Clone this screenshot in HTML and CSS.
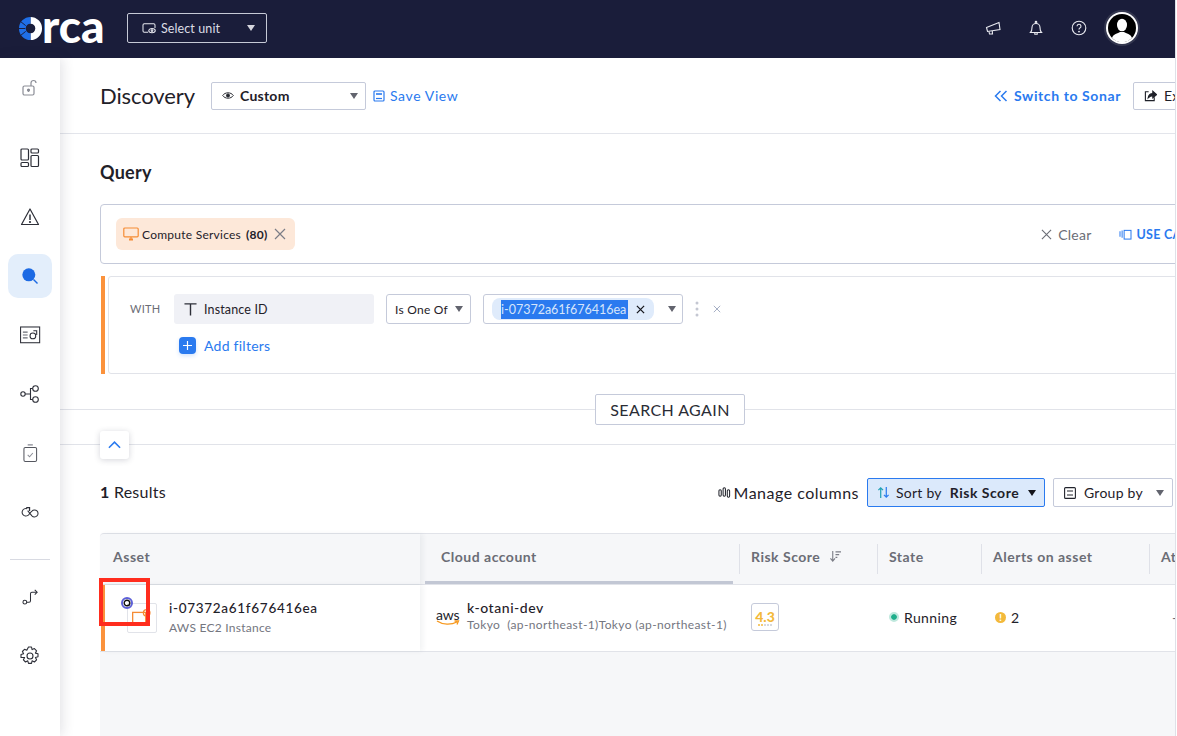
FILE: index.html
```html
<!DOCTYPE html>
<html lang="en">
<head>
<meta charset="utf-8">
<title>Orca Discovery</title>
<link rel="stylesheet" href="styles.css">
</head>
<body>
<div class="app">
  <header class="topbar">
    <div class="logo">
      <svg class="logo-o" viewBox="0 0 26 26" width="25" height="25"><path d="M13 1A12 12 0 0 1 13 25V18A5 5 0 0 0 13 8Z" fill="#fff"/><path d="M13 1A12 12 0 0 0 13 25V18A5 5 0 0 1 13 8Z" fill="#1f6fe8"/><path d="M3 6l5 4M1 13h6.500M3 20l5-4" stroke="#1a1d3a" stroke-width="1"/></svg>
      <span class="logo-text">rca</span>
    </div>
    <button class="unit-select">
      <svg viewBox="0 0 16 14" width="14" height="12" fill="none" stroke="#e8e9f0" stroke-width="1.2"><path d="M7 12H2.500A1.500 1.500 0 0 1 1 10.500V3.500A1.500 1.500 0 0 1 2.500 2H13.500A1.500 1.500 0 0 1 15 3.500V7"/><ellipse cx="11.500" cy="10" rx="3.800" ry="2.500"/><circle cx="11.500" cy="10" r="1"/></svg>
      <span class="unit-label">Select unit</span>
      <span class="caret caret-light"></span>
    </button>
    <div class="top-actions">
      <svg viewBox="0 0 16 16" width="16" height="16" fill="none" stroke="#e9eaf0" stroke-width="1.100"><path d="M1.500 7.500L14 2.500L15 9.500L2.500 11.500Z"/><path d="M4 11.500l.5 2.500h3l-.2-3"/></svg>
      <svg viewBox="0 0 16 16" width="16" height="16" fill="none" stroke="#e9eaf0" stroke-width="1.100"><path d="M2.500 12.500C4 11 4 9.500 4 7.500A4 4 0 0 1 12 7.500C12 9.500 12 11 13.500 12.500Z"/><circle cx="8" cy="2.200" r=".8"/><path d="M6.800 13v1.300h2.400V13"/></svg>
      <svg viewBox="0 0 16 16" width="16" height="16" fill="none" stroke="#e9eaf0" stroke-width="1.100"><circle cx="8" cy="8" r="6.800"/><path d="M6 6.200A2 2 0 1 1 8.600 8.200C8.100 8.500 8 8.800 8 9.600"/><circle cx="8" cy="11.600" r=".4"/></svg>
      <div class="avatar">
        <svg viewBox="0 0 28 28" width="28" height="28"><circle cx="14" cy="14" r="14" fill="#000"/><ellipse cx="14" cy="11" rx="5" ry="6.300" fill="#fff"/><path d="M4 24c1-4 6-4.500 8-6h4c2 1.500 7 2 8 6a14 14 0 0 1-20 0Z" fill="#fff"/></svg>
      </div>
    </div>
  </header>

  <div class="body-row">
    <nav class="sidebar">
      <div class="nav-item nav-lock">
        <svg viewBox="0 0 18 18" width="18" height="18" fill="none" stroke="#8b8d96" stroke-width="1.200"><rect x="2" y="7" width="11" height="9" rx="1.500"/><path d="M10 7V4a2.500 2.500 0 0 1 5 0"/><circle cx="7.500" cy="11" r="1" fill="#55575f"/><path d="M7.500 11v2"/></svg>
      </div>
      <div class="nav-item nav-first">
        <svg viewBox="0 0 20 20" width="20" height="20" fill="none" stroke="#2d2f38" stroke-width="1.200"><rect x="1" y="1" width="7.500" height="11" rx="1"/><rect x="1" y="14.500" width="7.500" height="4" rx="1"/><rect x="11" y="1" width="7.500" height="4" rx="1"/><rect x="11" y="7.500" width="7.500" height="11" rx="1"/></svg>
      </div>
      <div class="nav-item">
        <svg viewBox="0 0 20 20" width="20" height="20" fill="none" stroke="#2d2f38" stroke-width="1.200"><path d="M10 2L18.500 17.500H1.500Z" stroke-linejoin="round"/><path d="M10 7.500v5.500" stroke-width="1.500"/><circle cx="10" cy="15" r=".5"/></svg>
      </div>
      <div class="nav-item nav-active">
        <svg viewBox="0 0 18 18" width="18" height="18"><circle cx="7.800" cy="7.800" r="6.500" fill="#1c6ae4"/><path d="M12.500 12.500L16.500 16.500" stroke="#1c6ae4" stroke-width="1.400"/></svg>
      </div>
      <div class="nav-item">
        <svg viewBox="0 0 22 18" width="21" height="18" fill="none" stroke="#2d2f38" stroke-width="1.100"><rect x=".6" y=".6" width="20" height="16.500"/><path d="M3 6h5M3 9h5M3 12h5" stroke="#6b6d76"/><circle cx="13.500" cy="10" r="3"/><path d="M14 4.500h3.500V9"/></svg>
      </div>
      <div class="nav-item">
        <svg viewBox="0 0 20 18" width="20" height="18" fill="none" stroke="#2d2f38" stroke-width="1.100"><circle cx="3" cy="9" r="2.200"/><circle cx="15.500" cy="3.500" r="2.800"/><circle cx="15.500" cy="14.500" r="2.800"/><path d="M5.200 9h5M12.700 3.500H10.500V14.500H12.700"/></svg>
      </div>
      <div class="nav-item">
        <svg viewBox="0 0 16 20" width="15" height="19" fill="none" stroke="#55575f" stroke-width="1.100"><rect x="1" y="3.500" width="13.500" height="15" rx="1.500"/><path d="M5 .8h5.500" stroke="#8b8d96" stroke-width="1.400"/><path d="M5 11.500l2 2 3.500-4" stroke="#8b8d96"/></svg>
      </div>
      <div class="nav-item">
        <svg viewBox="0 0 20 14" width="19" height="14" fill="none" stroke="#2d2f38" stroke-width="1.100"><path d="M6.500 3.500A4 4 0 1 0 9 8.500L11.500 6A3.700 3.700 0 1 1 11.500 11L7 5.500"/><path d="M5.500 2.500H9V6" stroke-width="1.300"/></svg>
      </div>
      <div class="nav-divider"></div>
      <div class="nav-item nav-route">
        <svg viewBox="0 0 18 18" width="17" height="17" fill="none" stroke="#2d2f38" stroke-width="1.100"><circle cx="3" cy="15" r="2"/><path d="M5 15h2.500a1.500 1.500 0 0 0 1.500-1.500V6a1.500 1.500 0 0 1 1.500-1.500H16"/><path d="M13.500 2L16 4.500 13.500 7"/></svg>
      </div>
      <div class="nav-item nav-gear">
        <svg viewBox="0 0 20 20" width="20" height="20" fill="none" stroke="#2d2f38" stroke-width="1.100"><circle cx="10" cy="10" r="3"/><path d="M8.500 1h3l.6 2.600 2.300-1 2.200 2.200-1.200 2.300 2.600.7v3l-2.600.7 1.200 2.300-2.200 2.200-2.300-1.200-.6 2.600h-3l-.7-2.600-2.300 1.200-2.100-2.200 1.200-2.300L1 11.500v-3l2.600-.7-1.200-2.300 2.100-2.200 2.300 1z" stroke-linejoin="round"/></svg>
      </div>
    </nav>

    <main class="content">
      <div class="content-inner">
        <section class="page-head">
          <h1 class="page-title">Discovery</h1>
          <div class="view-select">
            <svg viewBox="0 0 14 10" width="12" height="9" fill="none" stroke="#22242c" stroke-width="1.100"><path d="M.8 5C3.500.8 10.500.8 13.200 5 10.500 9.200 3.500 9.200.8 5Z"/><circle cx="7" cy="5" r="1.800" fill="#22242c"/></svg>
            <span class="view-label">Custom</span>
            <span class="caret"></span>
          </div>
          <a class="save-view">
            <svg viewBox="0 0 12 12" width="12" height="12" fill="none" stroke="#2a7aef" stroke-width="1.200"><rect x="1" y="1" width="10" height="10" rx="1"/><path d="M3 4h6" stroke-width="1.600"/><path d="M3 8.500h6"/></svg>
            Save View
          </a>
          <div class="head-right">
            <a class="sonar-link">
              <svg viewBox="0 0 14 12" width="14" height="12" fill="none" stroke="#2a7aef" stroke-width="1.500"><path d="M6.500 1L1.500 6l5 5M12.500 1L7.500 6l5 5"/></svg>
              Switch to Sonar
            </a>
            <button class="export-btn">
              <svg viewBox="0 0 14 14" width="13" height="13" fill="none" stroke="#1f2129" stroke-width="1.200"><path d="M5 3H1.500v9.500h9.500V9"/><path d="M4.500 9.500C5 6 7.500 4.800 9.500 4.800V2.500L13.500 6 9.500 9.500V7.200C7.500 7.200 6 8 4.500 9.500Z" fill="#1f2129"/></svg>
              Export
            </button>
          </div>
        </section>

        <section class="query">
          <h2 class="query-title">Query</h2>
          <div class="query-box">
            <div class="chip-orange">
              <svg viewBox="0 0 16 14" width="16" height="14" fill="none" stroke="#f58c35" stroke-width="1.200"><rect x=".8" y="1" width="14.400" height="8.800" rx="1"/><path d="M6 12.500h4" stroke-width="2"/><path d="M8 10v2"/></svg>
              <span>Compute Services</span>
              <b>(80)</b>
              <svg class="chip-x" viewBox="0 0 12 12" width="12" height="12" stroke="#7b7d86" stroke-width="1.200"><path d="M1 1l10 10M11 1L1 11"/></svg>
            </div>
            <div class="query-actions">
              <span class="clear">
                <svg viewBox="0 0 12 12" width="11" height="11" stroke="#6b6d76" stroke-width="1.200"><path d="M1 1l10 10M11 1L1 11"/></svg>
                Clear
              </span>
              <span class="use-cases">
                <svg viewBox="0 0 14 12" width="13" height="11" fill="none" stroke="#2a7aef" stroke-width="1.100"><rect x="5.500" y="1.500" width="7.500" height="9.500"/><path d="M1 2.500v6M3.300 1.500v8"/></svg>
                USE CASES
              </span>
            </div>
          </div>
          <div class="filter-wrap">
            <div class="filter-bar"></div>
            <div class="filter-box">
              <div class="filter-row">
                <span class="with">WITH</span>
                <div class="field">
                  <svg viewBox="0 0 14 14" width="13" height="14" stroke="#2d2f38" stroke-width="1.500" fill="none"><path d="M.5 1.500h13M7 1.500V14"/></svg>
                  <span>Instance ID</span>
                </div>
                <div class="op-select"><span>Is One Of</span><span class="caret"></span></div>
                <div class="value-select">
                  <div class="value-chip">
                    <span class="selected-text">i-07372a61f676416ea</span>
                    <svg viewBox="0 0 10 10" width="9" height="9" stroke="#15161c" stroke-width="1.400"><path d="M1 1l8 8M9 1L1 9"/></svg>
                  </div>
                  <span class="caret"></span>
                </div>
                <svg class="dots" viewBox="0 0 4 16" width="4" height="16" fill="#c4c7d2"><circle cx="2" cy="2" r="1.500"/><circle cx="2" cy="8" r="1.500"/><circle cx="2" cy="14" r="1.500"/></svg>
                <svg class="remove" viewBox="0 0 10 10" width="8" height="8" stroke="#8f9ab5" stroke-width="1"><path d="M1 1l8 8M9 1L1 9"/></svg>
              </div>
              <div class="add-row">
                <span class="plus"><svg viewBox="0 0 10 10" width="9" height="9" stroke="#fff" stroke-width="1.300"><path d="M5 0v10M0 5h10"/></svg></span>
                <span class="add-label">Add filters</span>
              </div>
            </div>
          </div>
        </section>

        <div class="search-row">
          <span class="line line-left"></span>
          <button class="search-btn">SEARCH AGAIN</button>
          <span class="line line-right"></span>
        </div>
        <div class="collapse-row">
          <button class="collapse-btn">
            <svg viewBox="0 0 14 8" width="13" height="8" fill="none" stroke="#2a7aef" stroke-width="1.700"><path d="M1 7l6-6 6 6"/></svg>
          </button>
        </div>

        <section class="results">
          <div class="toolbar">
            <div class="count"><b>1</b> Results</div>
            <div class="manage">
              <svg viewBox="0 0 14 14" width="13" height="13" fill="none" stroke="#1f2129" stroke-width="1.100"><rect x="1" y="4" width="2.500" height="7" rx="1.200"/><rect x="5.500" y="2" width="2.500" height="9" rx="1.200"/><rect x="10" y="4" width="2.500" height="8" rx="1.200"/></svg>
              Manage columns
            </div>
            <div class="sort-btn">
              <svg viewBox="0 0 14 14" width="13" height="13" fill="none" stroke-width="1.300"><path d="M4 13V2M1.500 4.500L4 2l2.500 2.500" stroke="#21a0b5"/><path d="M10 1v11M7.500 9.500L10 12l2.500-2.500" stroke="#2a7aef"/></svg>
              <span>Sort by</span>
              <b>Risk Score</b>
              <span class="caret caret-dark"></span>
            </div>
            <div class="group-btn">
              <svg viewBox="0 0 12 12" width="12" height="12" fill="none" stroke="#22242c" stroke-width="1.100"><rect x=".6" y=".6" width="10.800" height="10.800" rx="1"/><path d="M3 4h6M3 8h6"/></svg>
              <span>Group by</span>
              <span class="caret"></span>
            </div>
          </div>

          <div class="table">
            <div class="table-head">
              <div class="th th-asset">Asset</div>
              <div class="th th-account"><span>Cloud account</span></div>
              <div class="th th-sep">Risk Score
                <svg viewBox="0 0 14 12" width="13" height="11" fill="none" stroke="#7b7d86" stroke-width="1.200"><path d="M4 0v10M1.500 8L4 11l2.500-3"/><path d="M7 1h6M7 4h4M7 7h2"/></svg>
              </div>
              <div class="th th-sep">State</div>
              <div class="th th-sep">Alerts on asset</div>
              <div class="th th-sep">Attack</div>
            </div>
            <div class="table-row">
              <div class="td td-asset">
                <div class="asset-icon">
                  <svg viewBox="0 0 30 30" width="28" height="28" fill="none" stroke="#f58c35" stroke-width="1.400"><rect x="5" y="9" width="14" height="11"/><path d="M8 22.500h8" stroke-width="2.200"/><circle cx="20" cy="9.500" r="3.500"/></svg>
                </div>
                <div class="asset-text">
                  <div class="asset-name">i-07372a61f676416ea</div>
                  <div class="asset-sub">AWS EC2 Instance</div>
                </div>
              </div>
              <div class="td td-account">
                <div class="aws">
                  <span class="aws-text">aws</span>
                  <svg viewBox="0 0 24 7" width="24" height="7" fill="none" stroke="#f7981d" stroke-width="1.300"><path d="M1 1c6 4 14 4 20 1M18.500 1H22.500L21 4.500"/></svg>
                </div>
                <div class="account-text">
                  <div class="account-name">k-otani-dev</div>
                  <div class="account-sub">Tokyo&nbsp; (ap-northeast-1)Tokyo (ap-northeast-1)</div>
                </div>
              </div>
              <div class="td">
                <div class="risk">
                  <span class="risk-num">4.3</span>
                  <span class="risk-dots"><i class="on"></i><i class="on"></i><i></i><i></i><i></i></span>
                </div>
              </div>
              <div class="td td-text"><span class="status-dot"></span>Running</div>
              <div class="td td-text"><span class="alert-dot">!</span>2</div>
              <div class="td td-text td-dash">-</div>
            </div>
          </div>
        </section>
      </div>
    </main>
  </div>
</div>
<div class="highlight-box">
  <svg class="ring" viewBox="0 0 12 12" width="12" height="12" fill="none"><circle cx="6" cy="6" r="5" stroke="#5d60d8" stroke-width="2"/><circle cx="6" cy="6" r="2.800" stroke="#111" stroke-width="1.400"/></svg>
</div>
</body>
</html>
```

FILE: styles.css
```css
* { box-sizing: border-box; }
html, body { margin: 0; height: 100%; overflow: hidden; background: #fff; }
body { font-family: "Lato", "Noto Sans", sans-serif; color: #1f2129; font-size: 14px; position: relative; letter-spacing: .25px; }
button { font: inherit; color: inherit; letter-spacing: inherit; background: #fff; }
svg { display: block; flex: none; }
h1, h2 { margin: 0; font-weight: 400; }

.app { width: 1176px; height: 736px; display: flex; flex-direction: column; overflow: hidden; border-right: 1px solid #dfe1e8; }

.topbar { height: 58px; flex: none; background: #1a1d3a; display: flex; align-items: center; padding: 0 0 2px 18px; }
.logo { display: flex; align-items: center; width: 109px; color: #fff; }
.logo-o { margin-right: -1px; }
.logo-text { font-size: 46px; font-weight: 900; line-height: 26px; letter-spacing: 0; margin-top: -5px; }
.unit-select { width: 140px; height: 30px; border: 1px solid #c6c9d6; border-radius: 2px; background: transparent; color: #dcdde5; display: flex; align-items: center; padding: 0 11px 0 14px; font-size: 12.500px; letter-spacing: .1px; }
.unit-label { margin-left: 5px; }
.caret { width: 0; height: 0; border-left: 4.500px solid transparent; border-right: 4.500px solid transparent; border-top: 6px solid #62646e; margin-left: auto; flex: none; }
.caret-light { border-top-color: #d5d6de; }
.caret-dark { border-top-color: #14151b; }
.top-actions { margin-left: auto; display: flex; align-items: center; gap: 27px; padding-right: 37px; }
.avatar { width: 32px; height: 32px; border-radius: 50%; background: #fff; padding: 2px; box-shadow: 0 0 0 2px #34374f; margin-left: -8px; }

.body-row { flex: 1; display: flex; min-height: 0; }
.sidebar { width: 60px; flex: none; display: flex; flex-direction: column; align-items: center; padding-top: 8px; gap: 15px; background: #fff; box-shadow: 2px 0 12px rgba(40, 44, 70, .14); z-index: 2; }
.nav-item { width: 44px; height: 44px; flex: none; display: flex; align-items: center; justify-content: center; border-radius: 10px; }
.nav-first { margin-top: 11px; }
.nav-active { background: #e3eefb; }
.nav-divider { width: 40px; height: 1px; background: #d8dae2; flex: none; margin-top: 10px; }
.nav-route { margin-top: -1px; }
.nav-gear { margin-top: 1px; }

.content { flex: 1; min-width: 0; overflow: hidden; background: #fff; }
.content-inner { width: 1180px; display: flex; flex-direction: column; height: 100%; }

.page-head { height: 76px; flex: none; border-bottom: 1px solid #e3e5eb; display: flex; align-items: center; padding: 0 22px 0 40px; }
.page-title { font-size: 22px; width: 111px; letter-spacing: -.1px; }
.view-select { width: 155px; height: 28px; border: 1px solid #c5cada; border-radius: 2px; display: flex; align-items: center; padding: 0 7px 0 10px; }
.view-label { font-weight: 700; margin-left: 6px; font-size: 14px; }
.save-view { display: flex; align-items: center; gap: 5px; color: #2a7aef; margin-left: 7px; letter-spacing: .6px; }
.head-right { margin-left: auto; display: flex; align-items: center; }
.sonar-link { display: flex; align-items: center; gap: 6px; color: #2a7aef; font-weight: 700; letter-spacing: .6px; }
.export-btn { margin-left: 12px; width: 85px; height: 28px; border: 1px solid #c5cada; border-radius: 2px; display: flex; align-items: center; gap: 7px; padding: 0 0 0 10px; }

.query { padding: 0 0 0 40px; flex: none; }
.query-title { font-size: 18px; font-weight: 700; line-height: 24px; margin: 26px 0 20px; }
.query-box { height: 60px; border: 1px solid #c5cada; border-radius: 4px; display: flex; align-items: center; justify-content: space-between; padding: 0 36px 0 15px; }
.chip-orange { height: 32px; width: 179px; background: #fde8d9; border-radius: 6px; display: flex; align-items: center; padding: 0 0 0 7px; font-size: 12px; }
.chip-orange span { margin-left: 3px; }
.chip-orange b { margin-left: 5px; font-weight: 700; }
.chip-x { margin-left: 6px; }
.query-actions { display: flex; align-items: center; gap: 27px; }
.clear { display: flex; align-items: center; gap: 6px; color: #6b6d76; }
.use-cases { display: flex; align-items: center; gap: 5px; color: #2a7aef; font-weight: 700; font-size: 12.500px; }

.filter-wrap { display: flex; margin-top: 12px; height: 98px; padding-left: 1px; }
.filter-bar { width: 4px; background: #fb923c; flex: none; margin-right: 3px; }
.filter-box { flex: 1; border: 1px solid #e1e3e9; border-radius: 3px; padding: 17px 0 0 21px; }
.filter-row { display: flex; align-items: center; height: 30px; }
.with { font-size: 11px; color: #6b6d76; width: 44px; margin-top: -1px; }
.field { width: 200px; height: 30px; background: #f0f1f6; border-radius: 3px; display: flex; align-items: center; padding: 0 0 0 10px; gap: 7px; font-size: 12.500px; letter-spacing: .15px; }
.op-select { width: 85px; height: 30px; margin-left: 12px; border: 1px solid #c5cada; border-radius: 3px; display: flex; align-items: center; padding: 0 7px 0 8px; font-size: 12px; }
.value-select { width: 200px; height: 30px; margin-left: 12px; border: 1px solid #c5cada; border-radius: 3px; display: flex; align-items: center; padding: 0 6px 0 8px; }
.value-chip { width: 162px; height: 22px; background: #dfebfb; border-radius: 8px; display: flex; align-items: center; padding: 0 0 0 9px; gap: 8px; }
.selected-text { background: #2a7aef; color: #d6e5fb; font-size: 12.500px; line-height: 19px; width: 127px; white-space: nowrap; overflow: hidden; letter-spacing: 0; }
.dots { margin-left: 12px; }
.remove { margin-left: 14px; }
.add-row { display: flex; align-items: center; margin: 13px 0 0 49px; }
.plus { width: 17px; height: 17px; background: #2a7aef; border-radius: 4px; display: flex; align-items: center; justify-content: center; box-shadow: 0 2px 4px rgba(42, 122, 239, .2); }
.add-label { color: #2a7aef; margin-left: 8px; }

.search-row { flex: none; display: flex; align-items: center; height: 31px; margin-top: 20px; }
.line { height: 1px; background: #e1e3e9; }
.line-left { width: 535px; }
.line-right { flex: 1; }
.search-btn { width: 150px; height: 31px; border: 1px solid #c5cada; border-radius: 2px; font-size: 16px; letter-spacing: .4px; padding: 0; color: #2a2c35; }

.collapse-row { flex: none; margin-top: 19px; height: 1px; background: #e1e3e9; position: relative; }
.collapse-btn { display: flex; align-items: center; justify-content: center; width: 29px; height: 28px; margin: -13px 0 0 40px; border: none; border-radius: 3px; box-shadow: 0 1px 6px rgba(40, 44, 70, .2); }

.results { flex: 1; display: flex; flex-direction: column; padding-left: 40px; min-height: 0; }
.toolbar { flex: none; height: 29px; margin-top: 33px; padding-right: 67px; display: flex; align-items: center; }
.count { font-size: 16px; flex: 1; margin-top: -2px; }
.count b { font-weight: 700; }
.manage { display: flex; align-items: center; gap: 3px; font-size: 16px; letter-spacing: .5px; margin-right: 8px; }
.sort-btn { width: 178px; height: 29px; background: #dbe9fb; border: 1px solid #2a7aef; border-radius: 2px; display: flex; align-items: center; padding: 0 8px 0 9px; }
.sort-btn span:not(.caret) { margin-left: 6px; }
.sort-btn b { margin-left: 8px; font-weight: 700; letter-spacing: .5px; }
.group-btn { width: 120px; height: 29px; margin-left: 8px; border: 1px solid #c5cada; border-radius: 2px; display: flex; align-items: center; padding: 0 8px 0 10px; }
.group-btn span:not(.caret) { margin-left: 8px; }

.table { flex: 1; display: flex; flex-direction: column; background: #f6f7f9; margin-top: 26px; border-top: 1px solid #e1e3e9; border-radius: 4px 0 0 0; }
.table-head, .table-row { display: grid; grid-template-columns: 320px 319px 138px 104px 168px 100px; }
.table-head { height: 51px; border-bottom: 1px solid #e1e3e9; flex: none; }
.th { font-weight: 700; color: #6b6d76; display: flex; align-items: center; gap: 9px; font-size: 14px; letter-spacing: .5px; padding: 0 0 5px 12px; white-space: nowrap; }
.th-asset { padding-left: 13px; box-shadow: 3px 0 5px rgba(40, 44, 70, .06); }
.th-account { padding: 0 6px 0 5px; align-items: stretch; }
.th-account span { flex: 1; padding: 0 0 2px 16px; display: flex; align-items: center; border-bottom: 3px solid #c2c7d4; }
.th-sep { position: relative; }
.th-sep::before { content: ""; position: absolute; left: 0; top: 10px; bottom: 10px; width: 1px; background: #dfe1e8; }
.table-row { height: 67px; background: #fff; border-bottom: 1px solid #e1e3e9; flex: none; }
.td { display: flex; align-items: center; padding-left: 12px; }
.td-asset { margin-left: 1px; border-left: 4px solid #fb923c; padding-left: 22px; gap: 12px; box-shadow: 3px 0 5px rgba(40, 44, 70, .06); }
.asset-icon { width: 30px; height: 30px; border: 1px solid #e1e3e9; border-radius: 2px; display: flex; align-items: center; justify-content: center; }
.asset-text { margin-top: -2px; }
.asset-name { font-size: 13.500px; font-weight: 500; letter-spacing: .7px; line-height: 18px; }
.asset-sub { font-size: 12px; color: #74767f; line-height: 16px; margin-top: 3px; }
.td-account { padding-left: 16px; gap: 7px; }
.account-text { margin-top: -4px; }
.aws-text { display: block; font-size: 14px; line-height: 11px; color: #22242c; letter-spacing: -.2px; }
.account-name { font-size: 14px; line-height: 18px; font-weight: 500; letter-spacing: .55px; }
.account-sub { font-size: 12px; letter-spacing: .38px; color: #74767f; line-height: 16px; white-space: nowrap; }
.risk { width: 28px; height: 28px; border: 1px solid #c5cada; border-radius: 3px; display: flex; flex-direction: column; align-items: center; justify-content: center; margin-top: -2px; }
.risk-num { color: #f3b93b; font-weight: 900; font-size: 14px; line-height: 15px; letter-spacing: 0; }
.risk-dots { display: flex; gap: 1px; }
.risk-dots i { width: 2px; height: 2px; border-radius: 50%; background: #c9ccd6; }
.risk-dots i.on { background: #f3b93b; }
.td-text { font-size: 14px; padding-bottom: 2px; letter-spacing: .4px; }
.status-dot { width: 10px; height: 10px; border-radius: 50%; background: #1fae8b; border: 2.500px solid #bfe8dd; background-clip: padding-box; margin-right: 5px; flex: none; }
.alert-dot { width: 11px; height: 11px; border-radius: 50%; background: #f3b93b; color: #fff; font-size: 9px; font-weight: 900; line-height: 11px; text-align: center; margin: 0 5px 0 2px; letter-spacing: 0; }
.td-dash { padding-left: 23px; color: #6b6d76; }

.highlight-box { position: absolute; left: 99px; top: 578px; width: 51px; height: 48px; border: 4px solid #ff2d1e; z-index: 5; }
.ring { position: absolute; left: 18px; top: 15px; }
```
